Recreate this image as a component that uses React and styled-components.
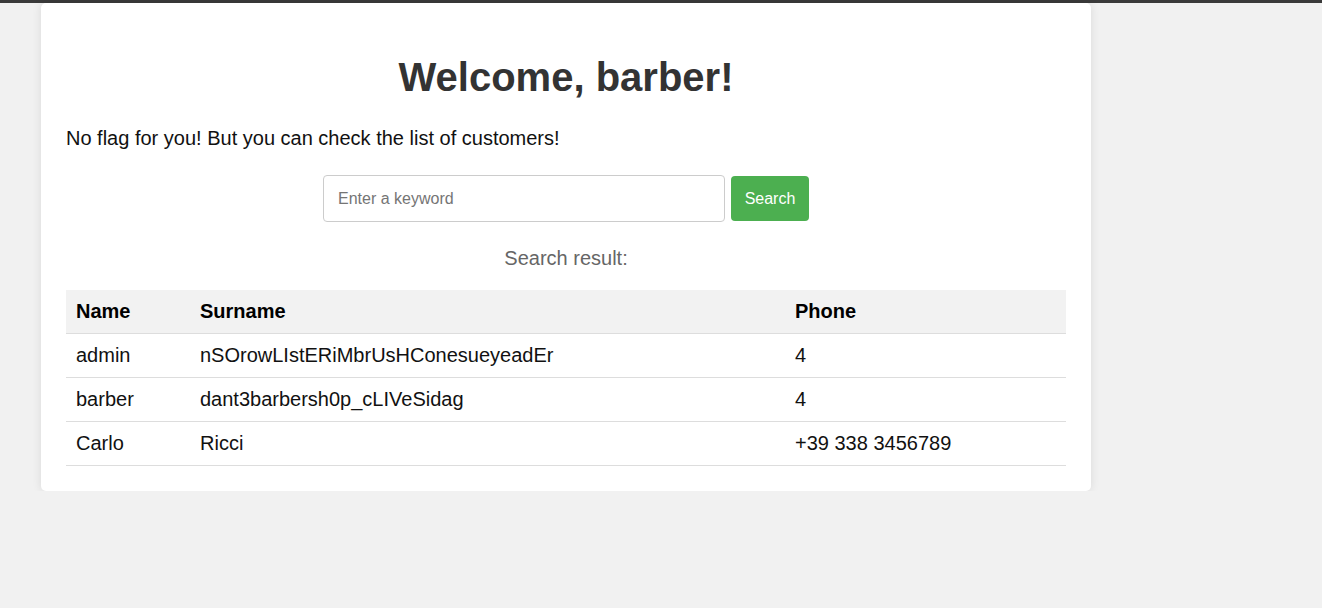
import { createGlobalStyle, styled } from "styled-components";

const GlobalStyle = createGlobalStyle`
  html, body {
    margin: 0;
    padding: 0;
    background-color: #f1f1f1;
    font-family: "Liberation Sans", Arial, sans-serif;
  }
`;

const TopBar = styled.div`
  height: 3px;
  background-color: #3a3a3a;
`;

const Container = styled.div`
  width: 1000px;
  margin-left: 41px;
  padding: 25px;
  background-color: #fff;
  border-radius: 5px;
  box-shadow: 0 0 10px rgba(0, 0, 0, 0.1);
`;

const Title = styled.h1`
  font-size: 40px;
  color: #333;
  text-align: center;
  margin: 27px 0 27px;
`;

const Message = styled.p`
  font-size: 20px;
  color: #111;
  margin: 0 0 25px;
`;

const SearchForm = styled.form`
  display: flex;
  justify-content: center;
  align-items: center;
  gap: 6px;
  margin-bottom: 25px;
`;

const InputField = styled.input`
  width: 402px;
  height: 47px;
  box-sizing: border-box;
  padding: 0 14px;
  font-size: 16px;
  font-family: "Liberation Sans", Arial, sans-serif;
  border: 1px solid #ccc;
  border-radius: 4px;
  outline: none;

  &::placeholder {
    color: #757575;
  }
`;

const Button = styled.button`
  width: 78px;
  height: 45px;
  background-color: #4caf50;
  color: #fff;
  border: none;
  border-radius: 4px;
  font-size: 16px;
  font-family: "Liberation Sans", Arial, sans-serif;
  cursor: pointer;
`;

const ResultTitle = styled.div`
  text-align: center;
  font-size: 20px;
  color: #666;
  margin-bottom: 20px;
`;

const Table = styled.table`
  width: 100%;
  border-collapse: collapse;
  font-size: 20px;
`;

const HeadCell = styled.th`
  text-align: left;
  background-color: #f2f2f2;
  padding: 0 10px;
  height: 43px;
  border-bottom: 1px solid #ddd;
  width: ${(p) => p.$width || "auto"};
  color: #000;
`;

const Cell = styled.td`
  padding: 0 10px;
  height: 43px;
  border-bottom: 1px solid #ddd;
  color: #111;
`;

const customers = [
  { name: "admin", surname: "nSOrowLIstERiMbrUsHConesueyeadEr", phone: "4" },
  { name: "barber", surname: "dant3barbersh0p_cLIVeSidag", phone: "4" },
  { name: "Carlo", surname: "Ricci", phone: "+39 338 3456789" },
];

export default function App() {
  return (
    <>
      <GlobalStyle />
      <TopBar />
      <Container>
        <Title>Welcome, barber!</Title>
        <Message>No flag for you! But you can check the list of customers!</Message>
        <SearchForm onSubmit={(e) => e.preventDefault()}>
          <InputField placeholder="Enter a keyword" />
          <Button type="submit">Search</Button>
        </SearchForm>
        <ResultTitle>Search result:</ResultTitle>
        <Table>
          <thead>
            <tr>
              <HeadCell $width="104px">Name</HeadCell>
              <HeadCell $width="575px">Surname</HeadCell>
              <HeadCell>Phone</HeadCell>
            </tr>
          </thead>
          <tbody>
            {customers.map((c) => (
              <tr key={c.name}>
                <Cell>{c.name}</Cell>
                <Cell>{c.surname}</Cell>
                <Cell>{c.phone}</Cell>
              </tr>
            ))}
          </tbody>
        </Table>
      </Container>
    </>
  );
}
